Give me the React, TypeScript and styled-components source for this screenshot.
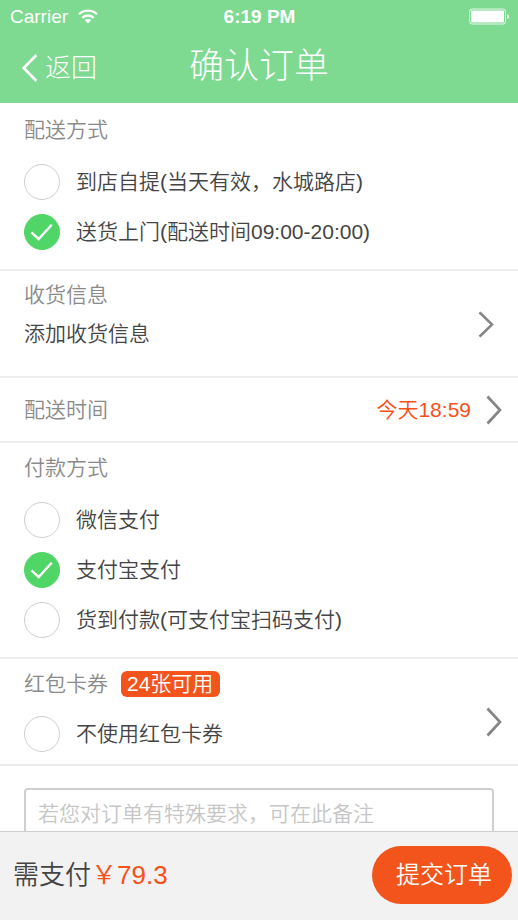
import React, { useState } from "react";
import styled, { createGlobalStyle } from "styled-components";

const GlobalStyle = createGlobalStyle`
  * { box-sizing: border-box; }
  body {
    margin: 0;
    background: #fff;
    color: #444;
    font-family: "Liberation Sans", "Noto Sans CJK SC", sans-serif;
    font-size: 21px;
    font-weight: 350;
    line-height: 30px;
  }
  button, input, textarea { font: inherit; color: inherit; }
  button { border: 0; padding: 0; background: none; cursor: pointer; }
`;

const Screen = styled.div`
  display: flex;
  flex-direction: column;
  height: 100vh;
`;

const Header = styled.header`
  flex: none;
  background: #7ed991;
  color: #fff;
`;

const StatusBar = styled.div`
  display: grid;
  grid-template-columns: 1fr auto 1fr;
  align-items: center;
  height: 33px;
  padding: 0 9px 0 10px;
  font-size: 19px;
`;

const Carrier = styled.span`
  display: flex;
  align-items: center;
  gap: 10px;
`;

const Clock = styled.span`
  font-weight: 700;
`;

const Battery = styled.svg`
  justify-self: end;
`;

const NavBar = styled.nav`
  display: grid;
  grid-template-columns: 1fr auto 1fr;
  align-items: center;
  height: 70px;
  padding: 0 22px;
`;

const BackButton = styled.button`
  display: flex;
  align-items: center;
  justify-self: start;
  gap: 7px;
  font-size: 26px;
  font-weight: 300;
`;

const PageTitle = styled.h1`
  margin: 0;
  padding-bottom: 4px;
  font-size: 35px;
  font-weight: 300;
  line-height: 48px;
`;

const Content = styled.main`
  flex: 1;
  min-height: 0;
  overflow-y: auto;
  scrollbar-width: none;
`;

const Section = styled.section`
  padding: 10px 24px 12px;
  border-bottom: 2px solid #ededed;
`;

const DeliverySection = styled(Section)`
  padding-top: 12px;
`;

const Group = styled.fieldset`
  min-width: 0;
  margin: 0;
  padding: 0;
  border: 0;
`;

const GroupTitle = styled.legend`
  padding: 0;
  margin-bottom: 12px;
  color: #8a8a8a;
`;

const Muted = styled.span`
  color: #8a8a8a;
`;

const Option = styled.label`
  display: flex;
  align-items: center;
  gap: 16px;
  height: 50px;
  cursor: pointer;
`;

const Mark = styled.span`
  display: grid;
  flex: none;
  width: 36px;
  height: 36px;

  > * { grid-area: 1 / 1; }
`;

const Dot = styled.input`
  appearance: none;
  width: 36px;
  height: 36px;
  margin: 0;
  border: 1px solid #cfcfcf;
  border-radius: 50%;
  background: #fff;

  &:checked {
    border-color: #50d567;
    background: #50d567;
  }
`;

const Tick = styled.svg`
  z-index: 1;
  pointer-events: none;
`;

const AddressButton = styled.button`
  display: flex;
  align-items: center;
  justify-content: space-between;
  width: 100%;
  padding: 9px 24px 0;
  border-bottom: 2px solid #ededed;
  text-align: left;
`;

const AddressText = styled.span`
  display: flex;
  flex-direction: column;
  gap: 9px;
  padding-bottom: 27px;
`;

const AddressArrow = styled.span`
  display: flex;
  padding-bottom: 8px;
`;

const TimeButton = styled.button`
  display: flex;
  align-items: center;
  gap: 15px;
  width: 100%;
  height: 65px;
  padding: 0 16px 0 24px;
  border-bottom: 2px solid #ededed;
`;

const TimeValue = styled.span`
  margin-left: auto;
  color: #f8501a;
`;

const CouponSection = styled.section`
  display: flex;
  align-items: flex-end;
  justify-content: space-between;
  padding: 10px 16px 5px 24px;
  border-bottom: 2px solid #ededed;
`;

const CouponTitle = styled.div`
  display: flex;
  align-items: center;
  gap: 13px;
  margin-bottom: 10px;
`;

const CouponButton = styled.button`
  display: flex;
  padding-bottom: 22px;
`;

const Badge = styled.span`
  padding: 0 7px 0 6px;
  border-radius: 6px;
  background: #f2541b;
  color: #fff;
  line-height: 26px;
`;

const NoteArea = styled.div`
  padding: 22px 24px;
`;

const Note = styled.textarea`
  display: block;
  width: 100%;
  height: 100px;
  padding: 9px 12px;
  border: 2px solid #cfcfcf;
  border-radius: 4px;
  resize: none;

  &::placeholder { color: #c6c6c6; opacity: 1; }
`;

const PayBar = styled.footer`
  display: flex;
  flex: none;
  align-items: center;
  justify-content: space-between;
  height: 89px;
  padding: 0 6px 2px 13px;
  border-top: 1px solid #cfcfcf;
  background: #f2f2f2;
  font-size: 26px;
`;

const Price = styled.span`
  color: #f8501a;
`;

const SubmitButton = styled.button`
  height: 58px;
  padding: 0 20px 0 24px;
  border-radius: 29px;
  background: #f2541b;
  color: #fff;
  font-size: 24px;
`;

function Chevron({ large }: { large?: boolean }) {
  const height = large ? 30 : 27;
  return (
    <svg width="16" height={height} viewBox="0 0 16 30" preserveAspectRatio="none" fill="none" stroke="#858585" strokeWidth="2.7" aria-hidden="true">
      <path d="M1.5 1.5 14 15 1.5 28.5" />
    </svg>
  );
}

type ChoiceProps = { name: string; label: string; checked: boolean; onSelect: () => void };

function Choice({ name, label, checked, onSelect }: ChoiceProps) {
  return (
    <Option>
      <Mark>
        <Dot type="radio" name={name} checked={checked} onChange={onSelect} />
        {checked && (
          <Tick width="36" height="36" viewBox="0 0 36 36" fill="none" stroke="#fff" strokeWidth="2.4" aria-hidden="true">
            <path d="m7.3 18.3 7.4 6.7 13-14.3" />
          </Tick>
        )}
      </Mark>
      {label}
    </Option>
  );
}

const deliveryOptions = ["到店自提(当天有效，水城路店)", "送货上门(配送时间09:00-20:00)"];
const paymentOptions = ["微信支付", "支付宝支付", "货到付款(可支付宝扫码支付)"];

export default function App() {
  const [delivery, setDelivery] = useState(1);
  const [payment, setPayment] = useState(1);
  const [noCoupon, setNoCoupon] = useState(false);

  return (
    <Screen>
      <GlobalStyle />
      <Header>
        <StatusBar>
          <Carrier>
            Carrier
            <svg width="20" height="15" viewBox="0 0 20 15" fill="none" stroke="#fff" strokeWidth="2.4" aria-hidden="true">
              <path d="M1 5.2a13 13 0 0 1 18 0M4.2 8.8a8.4 8.4 0 0 1 11.6 0" />
              <path d="M6.7 11.3a4.8 4.8 0 0 1 6.6 0L10 14.6z" fill="#fff" stroke="none" />
            </svg>
          </Carrier>
          <Clock>6:19 PM</Clock>
          <Battery width="40" height="17" viewBox="0 0 40 17" aria-hidden="true">
            <rect x=".5" y="1" width="36" height="15" rx="2.5" fill="none" stroke="#fff" strokeOpacity=".8" />
            <rect x="2" y="2.5" width="33" height="12" rx="1" fill="#fff" />
            <path d="M38 6q2 .5 2 2.5T38 11z" fill="#fff" />
          </Battery>
        </StatusBar>
        <NavBar>
          <BackButton type="button">
            <svg width="16" height="28" viewBox="0 0 16 28" fill="none" stroke="#fff" strokeWidth="2.6" aria-hidden="true">
              <path d="M14.5 1 1.7 14l12.8 13" />
            </svg>
            返回
          </BackButton>
          <PageTitle>确认订单</PageTitle>
        </NavBar>
      </Header>

      <Content>
        <DeliverySection>
          <Group>
            <GroupTitle>配送方式</GroupTitle>
            {deliveryOptions.map((label, i) => (
              <Choice key={label} name="delivery" label={label} checked={delivery === i} onSelect={() => setDelivery(i)} />
            ))}
          </Group>
        </DeliverySection>

        <AddressButton type="button">
          <AddressText>
            <Muted>收货信息</Muted>
            <span>添加收货信息</span>
          </AddressText>
          <AddressArrow>
            <Chevron />
          </AddressArrow>
        </AddressButton>

        <TimeButton type="button">
          <Muted>配送时间</Muted>
          <TimeValue>今天18:59</TimeValue>
          <Chevron large />
        </TimeButton>

        <Section>
          <Group>
            <GroupTitle>付款方式</GroupTitle>
            {paymentOptions.map((label, i) => (
              <Choice key={label} name="payment" label={label} checked={payment === i} onSelect={() => setPayment(i)} />
            ))}
          </Group>
        </Section>

        <CouponSection>
          <div>
            <CouponTitle>
              <Muted>红包卡券</Muted>
              <Badge>24张可用</Badge>
            </CouponTitle>
            <Choice name="coupon" label="不使用红包卡券" checked={noCoupon} onSelect={() => setNoCoupon(true)} />
          </div>
          <CouponButton type="button" aria-label="选择红包卡券">
            <Chevron large />
          </CouponButton>
        </CouponSection>

        <NoteArea>
          <Note aria-label="订单备注" placeholder="若您对订单有特殊要求，可在此备注" />
        </NoteArea>
      </Content>

      <PayBar>
        <span>
          需支付<Price>￥79.3</Price>
        </span>
        <SubmitButton type="button">提交订单</SubmitButton>
      </PayBar>
    </Screen>
  );
}
